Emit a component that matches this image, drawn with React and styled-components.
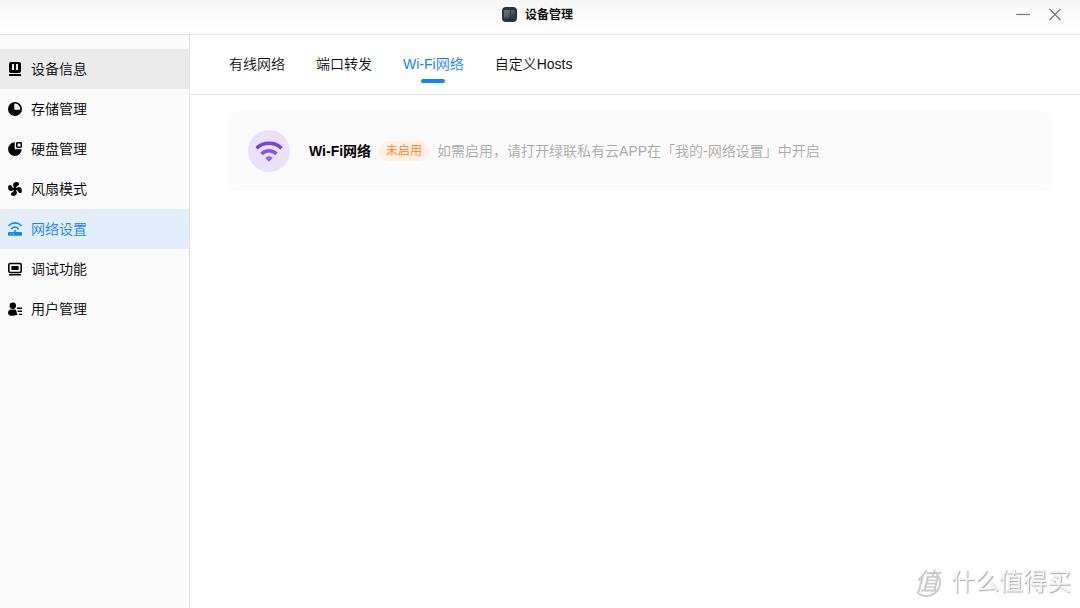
import React from 'react';
import styled, { createGlobalStyle } from 'styled-components';

const GlobalStyle = createGlobalStyle`
  * {
    box-sizing: border-box;
  }

  html, body, #root {
    height: 100%;
    margin: 0;
  }

  body {
    background: #fff;
    color: #111;
    font-family: 'Liberation Sans', 'Noto Sans CJK SC', sans-serif;
    font-size: 14px;
    font-weight: 350;
    line-height: 20px;
  }

  button {
    margin: 0;
    padding: 0;
    border: 0;
    background: none;
    color: inherit;
    font: inherit;
    cursor: pointer;
  }
`;

const Window = styled.div`
  min-height: 100%;
  display: flex;
  flex-direction: column;
`;

const TitleBar = styled.header`
  height: 35px;
  padding: 0 18px 4px;
  display: grid;
  grid-template-columns: 1fr auto 1fr;
  align-items: center;
  background: linear-gradient(#f6f6f6, #fefefe);
  border-bottom: 1px solid #e6e6e6;
`;

const TitleGroup = styled.div`
  grid-column: 2;
  display: flex;
  align-items: center;
  gap: 8px;
  margin-right: 6px;
`;

const Title = styled.h1`
  margin: 0;
  color: #111;
  font-size: 12px;
  font-weight: 700;
`;

const WindowControls = styled.div`
  display: flex;
  justify-content: flex-end;
  gap: 18px;
`;

const ControlButton = styled.button`
  width: 14px;
  height: 14px;

  svg {
    display: block;
  }
`;

const Body = styled.div`
  flex: 1;
  display: flex;
`;

const Sidebar = styled.nav`
  flex: 0 0 190px;
  padding-top: 14px;
  background: #fafafa;
  border-right: 1px solid #e2e2e2;
`;

const MenuItem = styled.button`
  width: 100%;
  height: 40px;
  padding: 0 8px;
  display: flex;
  align-items: center;
  gap: 9px;
  color: ${({ $active }) => ($active ? '#1284ff' : '#000')};
  background: ${({ $active, $hovered }) =>
    $active ? '#e4eefa' : $hovered ? '#ebebeb' : 'transparent'};

  svg {
    flex: none;
  }
`;

const Main = styled.main`
  flex: 1;
  min-width: 0;
`;

const Tabs = styled.div`
  height: 60px;
  padding: 19px 39px 0;
  display: flex;
  gap: 31px;
  border-bottom: 1px solid #e6e6e6;
`;

const Tab = styled.button`
  display: flex;
  flex-direction: column;
  align-items: center;
  gap: 5px;
  color: ${({ $active }) => ($active ? '#1284ff' : '#111')};

  &::after {
    content: '';
    width: 24px;
    height: 4px;
    border-radius: 2px;
    background: ${({ $active }) => ($active ? '#1284ff' : 'transparent')};
  }
`;

const Content = styled.section`
  padding: 16px 29px 16px 39px;
`;

const Card = styled.div`
  min-height: 80px;
  padding: 0 19px;
  display: flex;
  align-items: center;
  background: #fafafa;
  border-radius: 8px;
`;

const IconCircle = styled.div`
  flex: none;
  width: 42px;
  height: 42px;
  margin-right: 19px;
  display: flex;
  align-items: center;
  justify-content: center;
  background: #eae2fa;
  border-radius: 50%;
`;

const CardText = styled.div`
  display: flex;
  align-items: center;
  gap: 8px;
`;

const CardTitle = styled.h2`
  margin: 0;
  color: #000;
  font-size: 14px;
  font-weight: 700;
  white-space: nowrap;
`;

const Badge = styled.span`
  padding: 0 7px;
  color: #ff7a22;
  background: #fff0e6;
  border-radius: 10px;
  font-size: 12px;
  white-space: nowrap;
`;

const Hint = styled.p`
  margin: 0;
  color: #aaa;
`;

const Watermark = styled.div`
  position: fixed;
  right: 9px;
  bottom: 8px;
  display: flex;
  align-items: center;
  gap: 10px;
  color: #f4f4f4;
  font-size: 24px;
  font-weight: 400;
  line-height: 36px;
  text-shadow: 1px 1px 1px #aaa;
  pointer-events: none;
`;

const WatermarkLogo = styled.span`
  width: 29px;
  height: 29px;
  border: 2px solid #ccc;
  border-color: transparent #ccc #ccc transparent;
  border-radius: 50%;
  color: #ccc;
  font-size: 24px;
  font-weight: 500;
  font-style: italic;
  line-height: 24px;
  display: flex;
  justify-content: center;
  text-shadow: none;
`;

const Icon = ({ children }) => (
  <svg width="14" height="14" viewBox="0 0 14 14" fill="currentColor" aria-hidden="true">
    {children}
  </svg>
);

const DeviceIcon = () => (
  <Icon>
    <path
      fillRule="evenodd"
      d="M3 0h8a2 2 0 0 1 2 2v7a2 2 0 0 1-2 2H3a2 2 0 0 1-2-2V2a2 2 0 0 1 2-2Zm1 2v6h2V2Zm4 0v6h2V2Z"
    />
    <rect x="1" y="12" width="12" height="2" rx=".5" />
  </Icon>
);

const StorageIcon = () => (
  <Icon>
    <path
      fillRule="evenodd"
      d="M7 0a7 7 0 1 0 0 14A7 7 0 0 0 7 0Zm0 1.600a5.400 5.400 0 0 1 5.200 6.200H6.300V1.700Z"
    />
  </Icon>
);

const DiskIcon = () => (
  <Icon>
    <path d="M6.700.3v7h7A6.800 6.800 0 1 1 6.700.3Z" />
    <path
      fillRule="evenodd"
      d="M9.400 0h3.200A1.400 1.400 0 0 1 14 1.400v3.200A1.400 1.400 0 0 1 12.600 6H9.400A1.400 1.400 0 0 1 8 4.600V1.400A1.400 1.400 0 0 1 9.400 0Zm.2 1.500v3h2.900v-3Z"
    />
  </Icon>
);

const FanIcon = () => (
  <Icon>
    {[0, 90, 180, 270].map((angle) => (
      <path
        key={angle}
        transform={`rotate(${angle} 7 7)`}
        d="M6.300 6.700C6.300 5.600 5.500 5.100 5.200 3.900 4.700 1.700 6.300 0 8.800.1 10.600.2 11.500 1.500 10.900 2.700 10.400 3.700 9.100 3.800 8.500 4.700 8.100 5.300 8.100 6 7.800 6.800Z"
      />
    ))}
    <circle cx="7" cy="7" r="1.500" />
  </Icon>
);

const NetworkIcon = () => (
  <Icon>
    <g fill="none" stroke="currentColor" strokeWidth="1.600" strokeLinecap="round">
      <path d="M1 3.500c3.200-3.500 8.800-3.500 12 0" />
      <path d="M3.600 6.700c1.700-2.100 5.100-2.100 6.800 0" />
    </g>
    <path d="M6.400 8h1.400v2.500H6.400Z" />
    <path
      fillRule="evenodd"
      d="M1 10h12a1 1 0 0 1 1 1v2a.8.8 0 0 1-.8.8H.8A.8.8 0 0 1 0 13v-2a1 1 0 0 1 1-1Zm1.400 1.500v.9h1v-.9Zm2.500 0v.9h1v-.9Z"
    />
  </Icon>
);

const DebugIcon = () => (
  <Icon>
    <rect x=".8" y="1.500" width="12.400" height="9" rx="1.400" fill="none" stroke="currentColor" strokeWidth="1.600" />
    <rect x="3.400" y="4" width="7.200" height="4" />
    <rect x="1" y="12" width="12" height="1.600" rx=".5" />
  </Icon>
);

const UserIcon = () => (
  <Icon>
    <circle cx="4.800" cy="3.700" r="3.200" />
    <path d="M3 7.400h3.200c1.500 0 2 .6 2.200 1.900.2 1.500.6 2.600 1.200 3.300-.8.700-2.700 1.200-4.800 1.200C2 13.800 0 12.900 0 10.900 0 9 1.200 7.400 3 7.400Z" />
    <path d="M9 5.600h5V7H9ZM9.600 8.600H14V10H9.600ZM11 11.700h3v1.400h-3Z" />
  </Icon>
);

const AppIcon = () => (
  <svg width="16" height="16" viewBox="0 0 16 16" aria-hidden="true">
    <defs>
      <linearGradient id="screen" x1="0" y1="0" x2="1" y2="1">
        <stop offset="0" stopColor="#777b82" />
        <stop offset="1" stopColor="#292d36" />
      </linearGradient>
    </defs>
    <rect x="1" y="0" width="15" height="15" rx="4" fill="#293344" />
    <rect x="3" y="3" width="11" height="9" rx="1" fill="url(#screen)" />
    <path d="M9.500 3v9M3 12h11" stroke="#171a22" strokeWidth="1" strokeOpacity=".6" />
  </svg>
);

const WifiIcon = () => (
  <svg width="28" height="22" viewBox="0 0 28 22" fill="none" aria-hidden="true">
    <path d="M1.500 8.200c7-6.600 18-6.600 25 0" stroke="#7440f5" strokeWidth="3.400" />
    <path d="M6.500 14c4.200-4.300 10.800-4.300 15 0" stroke="#8453f6" strokeWidth="3.400" />
    <path d="M10.300 17.900c2.100-2.100 5.300-2.100 7.400 0L14 21.800Z" fill="#9460f7" />
  </svg>
);

const menuItems = [
  { label: '设备信息', icon: DeviceIcon, hovered: true },
  { label: '存储管理', icon: StorageIcon },
  { label: '硬盘管理', icon: DiskIcon },
  { label: '风扇模式', icon: FanIcon },
  { label: '网络设置', icon: NetworkIcon, active: true },
  { label: '调试功能', icon: DebugIcon },
  { label: '用户管理', icon: UserIcon },
];

const tabs = ['有线网络', '端口转发', 'Wi-Fi网络', '自定义Hosts'];

const App = () => {
  const [activeTab, setActiveTab] = React.useState('Wi-Fi网络');

  return (
    <Window lang="zh-CN">
      <GlobalStyle />
      <TitleBar>
        <TitleGroup>
          <AppIcon />
          <Title>设备管理</Title>
        </TitleGroup>
        <WindowControls>
          <ControlButton aria-label="最小化">
            <svg width="14" height="14" viewBox="0 0 14 14" stroke="#777" strokeWidth="1.200">
              <path d="M0 6.500h14" />
            </svg>
          </ControlButton>
          <ControlButton aria-label="关闭">
            <svg width="14" height="14" viewBox="0 0 14 14" stroke="#777" strokeWidth="1.300">
              <path d="M1.500 1l11 11M12.500 1l-11 11" />
            </svg>
          </ControlButton>
        </WindowControls>
      </TitleBar>
      <Body>
        <Sidebar>
          {menuItems.map(({ label, icon: ItemIcon, active, hovered }) => (
            <MenuItem key={label} $active={active} $hovered={hovered}>
              <ItemIcon />
              {label}
            </MenuItem>
          ))}
        </Sidebar>
        <Main>
          <Tabs role="tablist">
            {tabs.map((tab) => (
              <Tab
                key={tab}
                role="tab"
                aria-selected={tab === activeTab}
                $active={tab === activeTab}
                onClick={() => setActiveTab(tab)}
              >
                {tab}
              </Tab>
            ))}
          </Tabs>
          <Content>
            <Card>
              <IconCircle>
                <WifiIcon />
              </IconCircle>
              <CardText>
                <CardTitle>Wi-Fi网络</CardTitle>
                <Badge>未启用</Badge>
                <Hint>如需启用，请打开绿联私有云APP在「我的-网络设置」中开启</Hint>
              </CardText>
            </Card>
          </Content>
        </Main>
      </Body>
      <Watermark>
        <WatermarkLogo>值</WatermarkLogo>
        什么值得买
      </Watermark>
    </Window>
  );
};

export default App;
